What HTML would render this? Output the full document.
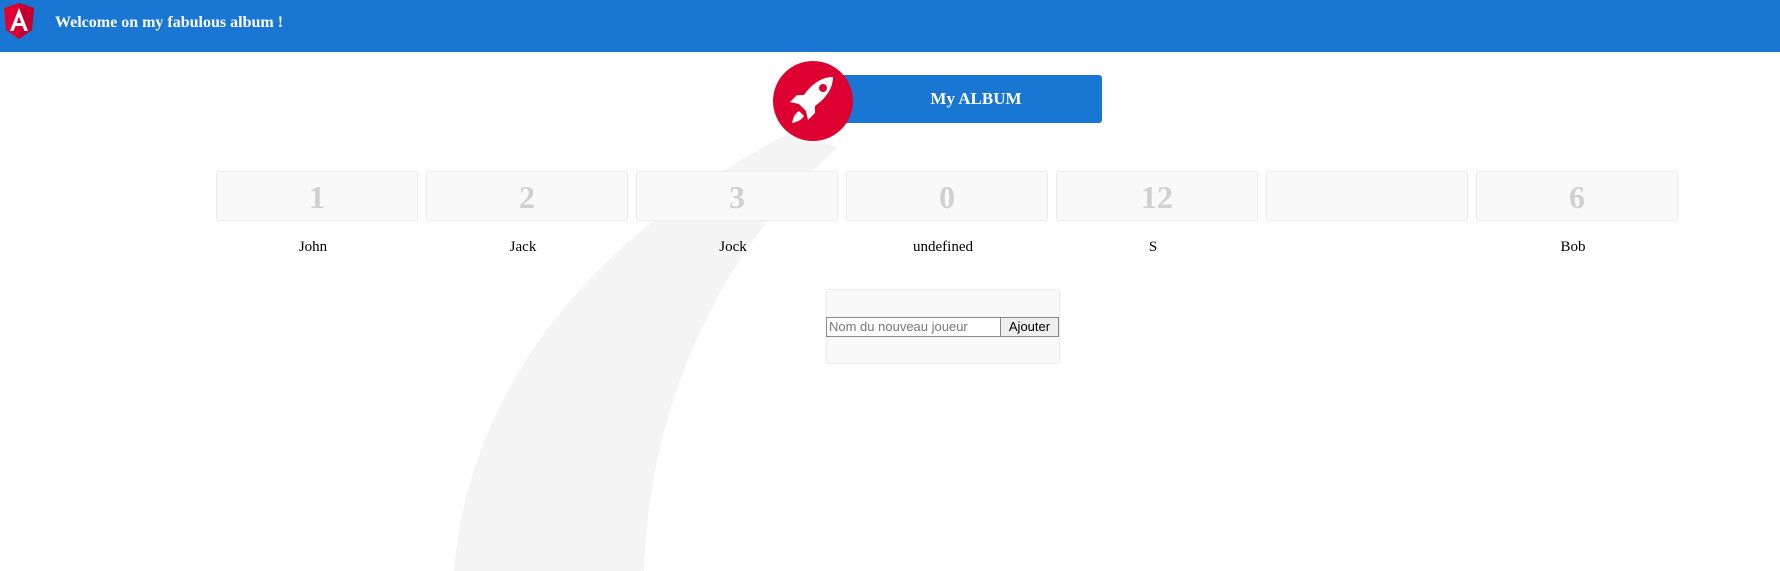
<!DOCTYPE html>
<html><head><meta charset="utf-8"><style>
body{margin:0;width:1780px;height:571px;overflow:hidden;background:#fff;font-family:"Liberation Serif",serif;position:relative}
.hdr{position:absolute;left:0;top:0;width:1780px;height:52px;background:#1976d2}
.hdr span{position:absolute;left:55px;top:14px;color:#fff;font-weight:bold;font-size:16px}
.btn{position:absolute;left:840px;top:75px;width:262px;height:48px;background:#1976d2;border-radius:3px;color:#fff;font-weight:bold;font-size:17px;text-align:center;line-height:48px;text-indent:10px}
.circ{position:absolute;left:773px;top:61px;width:80px;height:80px;border-radius:50%;background:#dd0031}
.card{position:absolute;top:171px;width:200px;height:48px;background:#f9f9f9;border:1px solid #ececec;border-radius:3px;color:#d0d0d0;font-weight:bold;font-size:32px;text-align:center;line-height:50px}
.nm{position:absolute;top:239px;width:202px;text-align:center;font-size:15px;color:#000}
.form{position:absolute;left:826px;top:289px;width:232px;height:73px;background:#f9f9f9;border:1px solid #ececec;border-radius:3px}
.inp{position:absolute;left:826px;top:317px;width:172px;height:18px;border:1px solid #888;background:#fff;font-family:"Liberation Sans",sans-serif;font-size:13px;color:#777;line-height:18px;padding-left:2px;box-sizing:content-box}
.ab{position:absolute;left:1000px;top:317px;width:57px;height:18px;border:1px solid #888;background:#efefef;font-family:"Liberation Sans",sans-serif;font-size:13px;text-align:center;line-height:18px}
</style></head><body>
<svg style="position:absolute;left:0;top:0" width="1780" height="571"><path d="M795 130 C600 230 470 380 454 571 L644 571 C650 380 740 230 838 148 Z" fill="#f4f4f4"/></svg>
<div class="hdr"><svg style="position:absolute;left:3px;top:3px" width="32" height="36" viewBox="0 0 32 36"><path d="M16 0 L31 5 L29 27 L16 36 L3 27 L1 5Z" fill="#dd0031"/><path d="M16 0 L31 5 L29 27 L16 36Z" fill="#c3002f"/><path d="M16 5 L7 28 H10.5 L12.5 23 H19.5 L21.5 28 H25 Z M13.7 20 L16 13.5 L18.3 20Z" fill="#fff"/></svg><span>Welcome on my fabulous album !</span></div>
<div class="btn">My ALBUM</div>
<div class="circ"><svg width="80" height="80" viewBox="0 0 80 80"><path d="M60 16 C48 16 38 24 31 34 L24 34 L17 41 L26 43 L33 50 L35 59 L42 52 L42 45 C52 38 60 28 60 16Z" fill="#fff"/><circle cx="50" cy="27" r="4" fill="#dd0031"/><path d="M26 50 C21 53 20 58 19 62 C23 61 28 60 31 55Z" fill="#fff"/></svg></div>
<div class="card" style="left:216px">1</div><div class="card" style="left:426px">2</div><div class="card" style="left:636px">3</div><div class="card" style="left:846px">0</div><div class="card" style="left:1056px">12</div><div class="card" style="left:1266px"></div><div class="card" style="left:1476px">6</div>
<div class="nm" style="left:212px">John</div><div class="nm" style="left:422px">Jack</div><div class="nm" style="left:632px">Jock</div><div class="nm" style="left:842px">undefined</div><div class="nm" style="left:1052px">S</div><div class="nm" style="left:1472px">Bob</div>
<div class="form"></div>
<div class="inp">Nom du nouveau joueur</div><div class="ab">Ajouter</div>
</body></html>
